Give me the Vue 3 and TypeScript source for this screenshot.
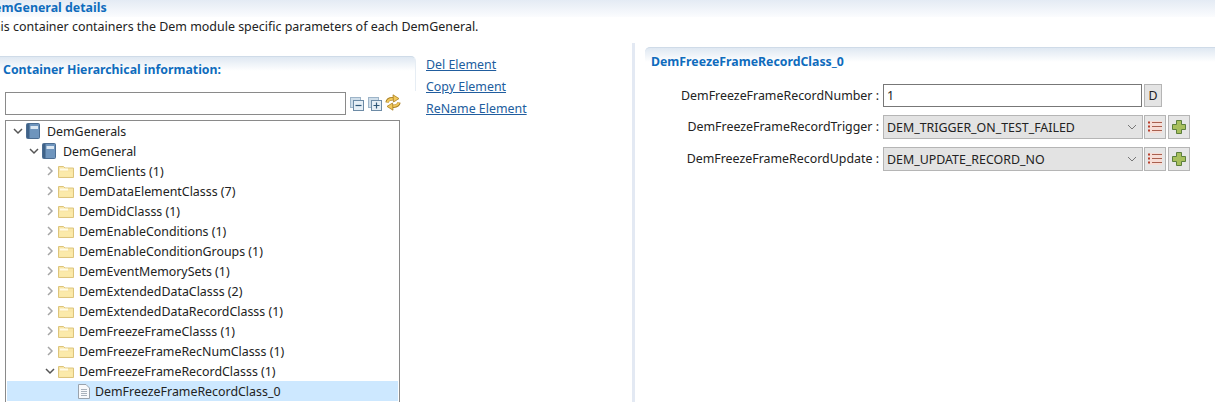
<script setup lang="ts">
interface Node { label: string; depth: number; open?: boolean; kind: 'book' | 'folder' | 'file'; selected?: boolean }
const nodes: Node[] = [
  { label: 'DemGenerals', depth: 0, open: true, kind: 'book' },
  { label: 'DemGeneral', depth: 1, open: true, kind: 'book' },
  { label: 'DemClients (1)', depth: 2, kind: 'folder' },
  { label: 'DemDataElementClasss (7)', depth: 2, kind: 'folder' },
  { label: 'DemDidClasss (1)', depth: 2, kind: 'folder' },
  { label: 'DemEnableConditions (1)', depth: 2, kind: 'folder' },
  { label: 'DemEnableConditionGroups (1)', depth: 2, kind: 'folder' },
  { label: 'DemEventMemorySets (1)', depth: 2, kind: 'folder' },
  { label: 'DemExtendedDataClasss (2)', depth: 2, kind: 'folder' },
  { label: 'DemExtendedDataRecordClasss (1)', depth: 2, kind: 'folder' },
  { label: 'DemFreezeFrameClasss (1)', depth: 2, kind: 'folder' },
  { label: 'DemFreezeFrameRecNumClasss (1)', depth: 2, kind: 'folder' },
  { label: 'DemFreezeFrameRecordClasss (1)', depth: 2, open: true, kind: 'folder' },
  { label: 'DemFreezeFrameRecordClass_0', depth: 3, kind: 'file', selected: true }
]
const links = ['Del Element', 'Copy Element', 'ReName Element']
const selects = [
  { label: 'DemFreezeFrameRecordTrigger :', value: 'DEM_TRIGGER_ON_TEST_FAILED' },
  { label: 'DemFreezeFrameRecordUpdate :', value: 'DEM_UPDATE_RECORD_NO' }
]
</script>

<template>
  <div class="page">
    <div class="head"><span class="head-title">DemGeneral details</span></div>
    <p class="desc">This container containers the Dem module specific parameters of each DemGeneral.</p>
    <div class="body">
      <section class="left">
        <div class="panel-head left-head">Container Hierarchical information:</div>
        <div class="filter-row">
          <input class="filter" type="text" />
          <svg class="tool" width="17" height="16" viewBox="0 0 17 16">
            <rect x="1.5" y="1.5" width="10" height="10" fill="#cfdeea" stroke="#9db4c8" />
            <rect x="4.5" y="4.5" width="10" height="10" fill="#e6eff6" stroke="#6d8ba6" />
            <path d="M6.500 9.500h6" stroke="#2f5778" stroke-width="1.200" />
          </svg>
          <svg class="tool" width="17" height="16" viewBox="0 0 17 16">
            <rect x="1.5" y="1.5" width="10" height="10" fill="#cfdeea" stroke="#9db4c8" />
            <rect x="4.5" y="4.5" width="10" height="10" fill="#e6eff6" stroke="#6d8ba6" />
            <path d="M6.500 9.500h6M9.500 6.500v6" stroke="#2f5778" stroke-width="1.200" />
          </svg>
          <svg class="sync" width="16" height="17" viewBox="0 0 16 17">
            <g fill="none" stroke-linecap="butt">
              <path d="M2 8.500C2.500 6 5 4.500 8.500 4.800" stroke="#a97f22" stroke-width="3.400" />
              <path d="M14 8.500C13.500 11 11 12.500 7.500 12.200" stroke="#a97f22" stroke-width="3.400" />
              <path d="M2.300 8.200C3 6 5 4.800 8.500 4.800" stroke="#f2c95c" stroke-width="2" />
              <path d="M13.700 8.800C13 11 11 12.200 7.500 12.200" stroke="#f2c95c" stroke-width="2" />
            </g>
            <path d="M8 .8l6 3.800-5.500 3.400Z" fill="#f2c95c" stroke="#a97f22" stroke-width=".8" />
            <path d="M8 16.200l-6-3.800 5.500-3.400Z" fill="#f2c95c" stroke="#a97f22" stroke-width=".8" />
          </svg>
        </div>
        <div class="tree">
          <div v-for="n in nodes" :key="n.label" class="row" :class="{ selected: n.selected }">
            <span class="indent" :class="'d' + n.depth"></span>
            <svg v-if="n.kind !== 'file'" class="twist" width="10" height="10" viewBox="0 0 10 10">
              <path v-if="n.open" d="M1 3l4 4 4-4" fill="none" stroke="#555" stroke-width="1.500" />
              <path v-else d="M3 1l4 4-4 4" fill="none" stroke="#a6a6a6" stroke-width="1.500" />
            </svg>
            <span v-else class="twist-gap"></span>
            <svg v-if="n.kind === 'book'" class="ico book" width="14" height="16" viewBox="0 0 14 16">
              <rect x=".5" y=".5" width="13" height="15" rx="1" fill="#6f95bd" stroke="#4c6d92" />
              <rect x="1" y="1" width="2.500" height="14" fill="#3f6288" />
              <rect x="4.500" y="3" width="7.500" height="3" fill="#dce8f3" />
            </svg>
            <svg v-else-if="n.kind === 'folder'" class="ico" width="16" height="13" viewBox="0 0 16 13">
              <path d="M.5 12.500v-11h5l1.500 1.500h8.500v9.500Z" fill="#f9e6a6" stroke="#dcc47c" />
              <path d="M2 4.500h8" stroke="#fffbe8" stroke-width="2" />
              <path d="M1.500 7h13v4.500h-13Z" fill="#fbeaaa" />
            </svg>
            <svg v-else class="ico" width="12" height="15" viewBox="0 0 12 15">
              <path d="M.5.500h7.500l3.500 3.500v10.500h-11Z" fill="#f8f9fb" stroke="#9aa3ad" />
              <path d="M3 5.500h6M3 7.500h6M3 9.500h6M3 11.500h6" stroke="#a9b2bc" />
            </svg>
            <span class="label">{{ n.label }}</span>
          </div>
        </div>
      </section>
      <nav class="links">
        <a v-for="l in links" :key="l" href="#" class="link">{{ l }}</a>
      </nav>
      <div class="sash"></div>
      <section class="right">
        <div class="panel-head right-head">DemFreezeFrameRecordClass_0</div>
        <div class="form">
          <div class="frow first">
            <label class="flabel">DemFreezeFrameRecordNumber :</label>
            <input class="num" type="text" value="1" />
            <button class="dbtn">D</button>
          </div>
          <div v-for="s in selects" :key="s.label" class="frow">
            <label class="flabel">{{ s.label }}</label>
            <div class="select">
              <span>{{ s.value }}</span>
              <svg width="10" height="6" viewBox="0 0 10 6"><path d="M1 1l4 4 4-4" fill="none" stroke="#777" /></svg>
            </div>
            <button class="ibtn">
              <svg width="14" height="12" viewBox="0 0 14 12">
                <rect x="1" y="0" width="13" height="12" fill="#f6ddd6" />
                <path d="M0 1.500h2M0 5.500h2M0 9.500h2" stroke="#b8412f" stroke-width="2" />
                <path d="M4 1.500h10M4 5.500h10M4 9.500h10" stroke="#a9604f" />
              </svg>
            </button>
            <button class="ibtn">
              <svg width="16" height="16" viewBox="0 0 16 16">
                <path d="M5.500 1.500h5v4h4v5h-4v4h-5v-4h-4v-5h4Z" fill="#a7bf5c" stroke="#5c7f3c" />
              </svg>
            </button>
          </div>
        </div>
      </section>
    </div>
  </div>
</template>

<style>
html, body { margin: 0; background: #fff; overflow: hidden; }
</style>

<style scoped>
.page { width: 1215px; height: 402px; overflow: hidden; background: #fff; font: 12.4px "Noto Sans", sans-serif; color: #222; display: flex; flex-direction: column; }
.head { height: 17px; background: linear-gradient(#e4ebf4, #fbfcfe); flex: none; }
.head-title { display: block; margin-left: -15px; font-weight: 700; color: #0f6cbd; line-height: 15px; }
.desc { margin: 0 0 0 -14px; height: 21px; line-height: 20px; flex: none; white-space: nowrap; font-size: 12.45px; }
.body { display: flex; flex: 1; min-height: 0; padding-top: 4px; }
.left { width: 416px; flex: none; padding-top: 14px; }
.panel-head { background: linear-gradient(#dfe8f2, #fff 14px); font-weight: 700; font-size: 12.3px; color: #0f6cbd; border-top: 1px solid #cfdbe8; border-top-right-radius: 5px; }
.left-head { height: 35px; box-sizing: border-box; line-height: 26px; padding-left: 3px; border-right: 1px solid #e6edf4; }
.filter-row { display: flex; align-items: center; padding-left: 5px; height: 23px; margin-top: 1px; }
.filter { width: 341px; height: 23px; box-sizing: border-box; border: 1px solid #8a8a8a; margin: 0 3px 0 0; padding: 0; background: #fff; }
.tool { margin-right: 1px; flex: none; }
.sync { flex: none; margin-top: -3px; }
.tree { width: 395px; margin: 5px 0 0 5px; border: 1px solid #8a8a8a; box-sizing: border-box; padding: 0 1px; height: 300px; }
.row { display: flex; align-items: center; height: 20px; white-space: nowrap; }
.row.selected { background: #cde8ff; }
.indent { flex: none; }
.d0 { width: 6px; }
.d1 { width: 22px; }
.d2 { width: 38px; }
.d3 { width: 58px; }
.twist { flex: none; margin-right: 3px; }
.twist-gap { width: 13px; flex: none; }
.ico { flex: none; margin-right: 5px; }
.book { margin-right: 7px; }
.label { color: #222; }
.links { width: 216px; flex: none; display: flex; flex-direction: column; padding: 13px 0 0 10px; box-sizing: border-box; }
.link { height: 22px; line-height: 20px; color: #215d9e; text-decoration: underline; align-self: flex-start; }
.sash { width: 3px; margin-top: 1px; background: #e3e9f3; flex: none; margin-right: 10px; }
.right { flex: 1; padding-top: 5px; }
.right-head { height: 37px; box-sizing: border-box; line-height: 28px; padding-left: 6px; border-top-left-radius: 5px; border-top-right-radius: 0; }
.form { display: flex; flex-direction: column; gap: 8px; }
.frow { display: flex; align-items: stretch; height: 24px; }
.first { height: 23px; }
.flabel { width: 238px; padding-right: 4px; box-sizing: border-box; text-align: right; line-height: 23px; flex: none; white-space: nowrap; }
.num { width: 259px; box-sizing: border-box; border: 1px solid #777; margin: 0 2px 0 0; padding: 0 3px; font: inherit; color: #222; }
.dbtn { width: 18px; padding: 0; border: 1px solid #b5b5b5; background: #e4e4e4; font: inherit; color: #222; }
.select { width: 260px; box-sizing: border-box; border: 1px solid #b5b5b5; background: #e3e3e3; display: flex; align-items: center; justify-content: space-between; padding: 0 5px 0 3px; margin-right: 1px; color: #222; }
.ibtn { width: 22px; padding: 0; margin-right: 2px; border: 1px solid #b5b5b5; background: #e6e6e6; display: flex; align-items: center; justify-content: center; }
</style>
